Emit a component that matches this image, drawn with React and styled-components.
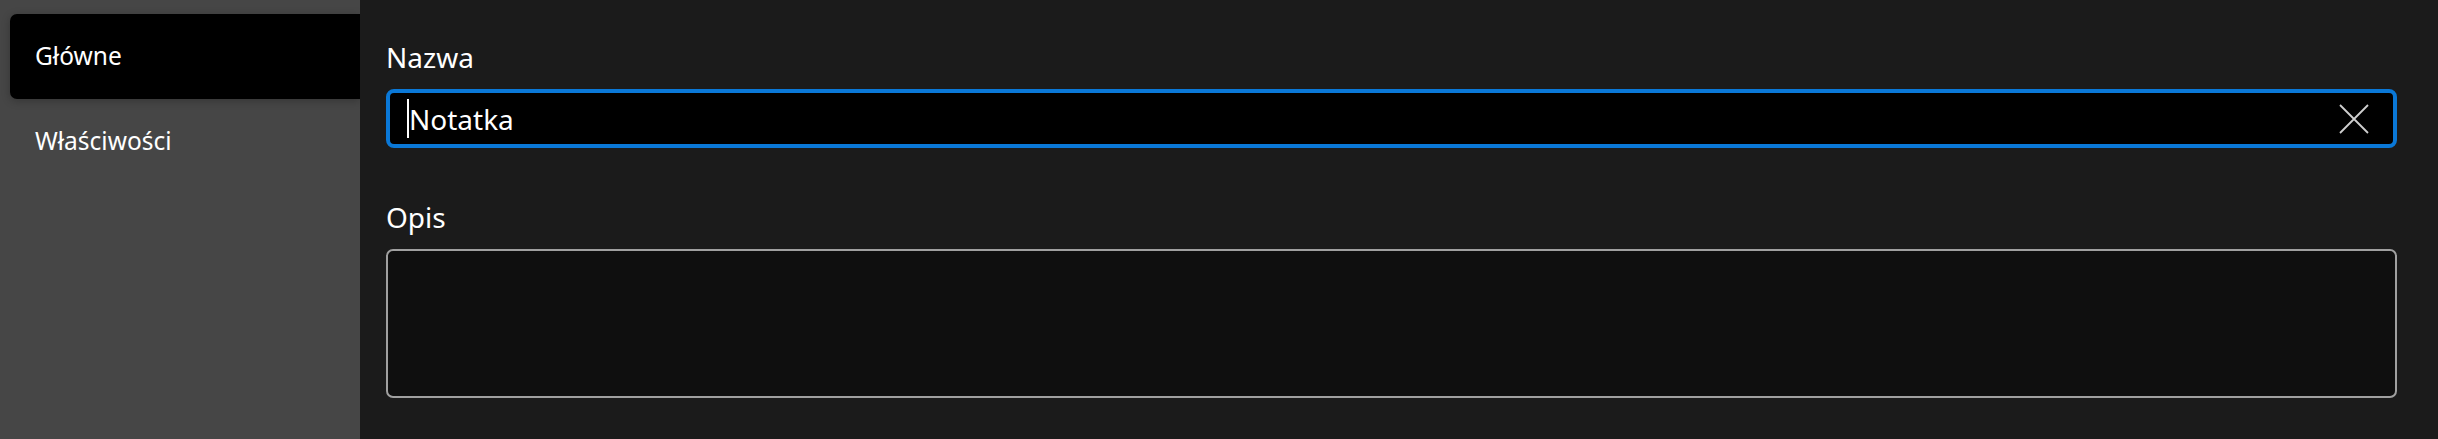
import React from "react";
import styled, { createGlobalStyle } from "styled-components";

const Global = createGlobalStyle`
  html, body { margin: 0; padding: 0; background: #1b1b1b; }
  body { font-family: "Segoe UI", "Noto Sans", sans-serif; }
`;

const Page = styled.div`
  display: flex;
  height: 439px;
  width: 2438px;
  overflow: hidden;
`;

const Sidebar = styled.nav`
  width: 360px;
  flex: 0 0 360px;
  background: #464646;
  padding: 14px 0 0 10px;
  box-sizing: border-box;
  display: flex;
  flex-direction: column;
`;

const Tab = styled.div`
  height: 85px;
  display: flex;
  align-items: center;
  padding-left: 25px;
  font-size: 24.5px;
  color: #ffffff;
  border-radius: 7px 0 0 7px;
  background: ${(p) => (p.$active ? "#000000" : "transparent")};
  box-shadow: ${(p) => (p.$active ? "0 2px 8px rgba(0,0,0,0.25)" : "none")};
  padding-bottom: 2px;
  box-sizing: border-box;
`;

const Content = styled.main`
  flex: 1;
  background: #1b1b1b;
  padding: 38px 41px 0 26px;
  display: flex;
  flex-direction: column;
`;

const Label = styled.div`
  font-size: 28px;
  line-height: 38px;
  color: #ffffff;
  margin-top: ${(p) => p.$top || 0}px;
  margin-bottom: 13px;
`;

const TextBox = styled.div`
  height: 59px;
  box-sizing: border-box;
  border: 4px solid #0a78d7;
  border-radius: 8px;
  background: #000000;
  display: flex;
  align-items: center;
  padding: 0 24px 0 17px;
`;

const Caret = styled.span`
  width: 2px;
  height: 39px;
  background: #ffffff;
  flex: 0 0 auto;
`;

const Value = styled.span`
  flex: 1;
  font-size: 28px;
  color: #ffffff;
  line-height: 38px;
`;

const ClearButton = styled.span`
  width: 30px;
  height: 30px;
  display: flex;
  align-items: center;
  justify-content: center;
`;

const Area = styled.div`
  height: 149px;
  box-sizing: border-box;
  border: 2px solid #a0a0a0;
  border-radius: 7px;
  background: #0f0f0f;
`;

export default function App() {
  return (
    <Page>
      <Global />
      <Sidebar>
        <Tab $active>Główne</Tab>
        <Tab>Właściwości</Tab>
      </Sidebar>
      <Content>
        <Label>Nazwa</Label>
        <TextBox>
          <Caret />
          <Value>Notatka</Value>
          <ClearButton>
            <svg width="30" height="30" viewBox="0 0 30 30">
              <path d="M1 1 L29 29 M29 1 L1 29" stroke="#cfcfcf" strokeWidth="1.8" fill="none" />
            </svg>
          </ClearButton>
        </TextBox>
        <Label $top={50}>Opis</Label>
        <Area />
      </Content>
    </Page>
  );
}
